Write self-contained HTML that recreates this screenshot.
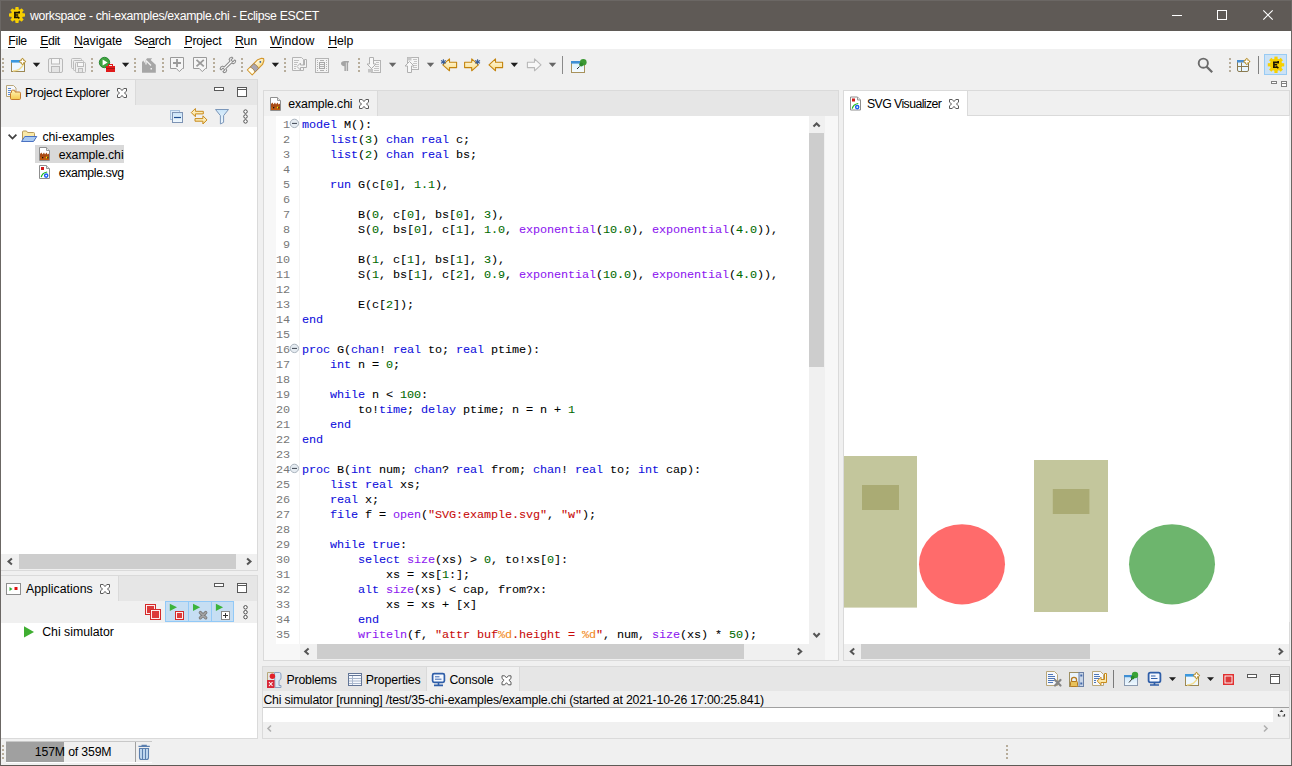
<!DOCTYPE html>
<html><head><meta charset="utf-8">
<style>
*{margin:0;padding:0;box-sizing:border-box}
html,body{width:1292px;height:766px;overflow:hidden;background:#f0f0f0;font-family:"Liberation Sans",sans-serif;font-size:12.3px;color:#000}
.a{position:absolute}
.t{position:absolute;white-space:pre;line-height:15px}
svg{position:absolute;overflow:visible}
/* title */
#title{left:0;top:0;width:1292px;height:31px;background:#5f5a56}
#wb{left:0;top:0;width:1292px;height:766px;border-left:1px solid #6b6764;border-top:1px solid #6b6764;border-right:1px solid #6b6764;border-bottom:1px solid #5f5a56}
#menu{left:1px;top:31px;width:1290px;height:18px;background:#fff}
.mi{position:absolute;top:33px;white-space:pre;line-height:15px}
.mi u{text-decoration:none;border-bottom:1px solid #000;display:inline-block;line-height:11px}
/* panels */
.pb{position:absolute;border:1px solid #dadada}
.hdr{position:absolute;background:#e6e6e6}
.tab{position:absolute;background:#f0f0f0;border-right:1px solid #dadada}
.white{position:absolute;background:#fff}
.code{position:absolute;font-family:"Liberation Mono",monospace;font-size:11.8px;letter-spacing:-0.08px;line-height:15px;white-space:pre;color:#000;-webkit-text-stroke:0.08px currentColor}
.ln{-webkit-text-stroke:0}
.kw{color:#1010dc}
.fn{color:#8e18f0}
.nu{color:#006a00}
.st{color:#c80a0a}
.fm{color:#f28a1a}
.ln{color:#787878;text-align:right}
.sbt{position:absolute;background:#cdcdcd}
</style></head><body>
<!-- title bar -->
<div id="title" class="a"></div>
<svg style="left:0;top:0" width="40" height="30">
<g fill="#f7cf00" transform="translate(17 15)">
<circle r="6"/>
<rect x="-1.7" y="-8" width="3.4" height="16" rx="0.8"/>
<rect x="-8" y="-1.7" width="16" height="3.4" rx="0.8"/>
<rect x="-1.7" y="-8" width="3.4" height="16" rx="0.8" transform="rotate(45)"/>
<rect x="-1.7" y="-8" width="3.4" height="16" rx="0.8" transform="rotate(-45)"/>
</g>
<path d="M14 12.6H19.6M14.9 12.2V17.6M14.9 15H18.2M14 17.4H17.6M19.2 11.2V13.6M17.2 16.6L19.4 18.4" stroke="#1a1400" stroke-width="1.6" fill="none"/>
</svg>
<svg style="left:1172px;top:15px" width="10" height="1"><rect width="10" height="1" fill="#fff"/></svg>
<svg style="left:1217px;top:10px" width="10" height="10"><rect x="0.5" y="0.5" width="9" height="9" fill="none" stroke="#fff"/></svg>
<svg style="left:1263px;top:10px" width="10" height="10"><path d="M0.3 0.3L9.7 9.7M9.7 0.3L0.3 9.7" stroke="#fff" stroke-width="1.1"/></svg>

<!-- menu -->
<div id="menu" class="a"></div>

<!-- ===== Project Explorer panel ===== -->
<div class="pb" style="left:0px;top:79px;width:258px;height:492px;border-left:none"></div>
<div class="hdr" style="left:1px;top:80px;width:256px;height:25px"></div>
<div class="tab" style="left:1px;top:80px;width:135px;height:25px"></div>
<div class="white" style="left:1px;top:127px;width:256px;height:427px"></div>
<!-- tree -->
<div class="a" style="left:35px;top:145px;width:89px;height:18px;background:#d9d9d9"></div>
<!-- hscroll -->
<div class="sbt" style="left:19px;top:554px;width:217px;height:15px"></div>

<!-- ===== Applications panel ===== -->
<div class="pb" style="left:0px;top:575px;width:258px;height:164px;border-left:none"></div>
<div class="hdr" style="left:1px;top:576px;width:256px;height:25px"></div>
<div class="tab" style="left:1px;top:576px;width:118px;height:25px"></div>
<div class="white" style="left:1px;top:623px;width:256px;height:115px"></div>

<!-- ===== Editor panel ===== -->
<div class="pb" style="left:263px;top:90px;width:576px;height:571px"></div>
<div class="hdr" style="left:264px;top:91px;width:574px;height:25px"></div>
<div class="tab" style="left:264px;top:91px;width:114px;height:25px"></div>
<div class="a" style="left:264px;top:116px;width:574px;height:544px;background:#fff"></div>
<div class="a" style="left:264px;top:116px;width:12px;height:528px;background:#f7f7f7"></div>
<div class="a" style="left:825px;top:116px;width:13px;height:544px;background:#f7f7f7"></div>
<div class="a" style="left:264px;top:644px;width:36px;height:16px;background:#f7f7f7"></div>
<div class="code ln" style="left:264px;top:118px;width:26px">1
2
3
4
5
6
7
8
9
10
11
12
13
14
15
16
17
18
19
20
21
22
23
24
25
26
27
28
29
30
31
32
33
34
35</div>
<div class="a" style="left:299px;top:116px;width:510px;height:528px;overflow:hidden">
<div class="code" style="left:3px;top:2px"><span class="kw">model</span> M():
    <span class="kw">list</span>(<span class="nu">3</span>) <span class="kw">chan</span> <span class="kw">real</span> c;
    <span class="kw">list</span>(<span class="nu">2</span>) <span class="kw">chan</span> <span class="kw">real</span> bs;

    <span class="kw">run</span> G(c[<span class="nu">0</span>], <span class="nu">1.1</span>),

        B(<span class="nu">0</span>, c[<span class="nu">0</span>], bs[<span class="nu">0</span>], <span class="nu">3</span>),
        S(<span class="nu">0</span>, bs[<span class="nu">0</span>], c[<span class="nu">1</span>], <span class="nu">1.0</span>, <span class="fn">exponential</span>(<span class="nu">10.0</span>), <span class="fn">exponential</span>(<span class="nu">4.0</span>)),

        B(<span class="nu">1</span>, c[<span class="nu">1</span>], bs[<span class="nu">1</span>], <span class="nu">3</span>),
        S(<span class="nu">1</span>, bs[<span class="nu">1</span>], c[<span class="nu">2</span>], <span class="nu">0.9</span>, <span class="fn">exponential</span>(<span class="nu">10.0</span>), <span class="fn">exponential</span>(<span class="nu">4.0</span>)),

        E(c[<span class="nu">2</span>]);
<span class="kw">end</span>

<span class="kw">proc</span> G(<span class="kw">chan</span>! <span class="kw">real</span> to; <span class="kw">real</span> ptime):
    <span class="kw">int</span> n = <span class="nu">0</span>;

    <span class="kw">while</span> n &lt; <span class="nu">100</span>:
        to!<span class="kw">time</span>; <span class="kw">delay</span> ptime; n = n + <span class="nu">1</span>
    <span class="kw">end</span>
<span class="kw">end</span>

<span class="kw">proc</span> B(<span class="kw">int</span> num; <span class="kw">chan</span>? <span class="kw">real</span> from; <span class="kw">chan</span>! <span class="kw">real</span> to; <span class="kw">int</span> cap):
    <span class="kw">list</span> <span class="kw">real</span> xs;
    <span class="kw">real</span> x;
    <span class="kw">file</span> f = <span class="fn">open</span>(<span class="st">&quot;SVG:example.svg&quot;</span>, <span class="st">&quot;w&quot;</span>);

    <span class="kw">while</span> <span class="kw">true</span>:
        <span class="kw">select</span> <span class="fn">size</span>(xs) &gt; <span class="nu">0</span>, to!xs[<span class="nu">0</span>]:
            xs = xs[<span class="nu">1</span>:];
        <span class="kw">alt</span> <span class="fn">size</span>(xs) &lt; cap, from?x:
            xs = xs + [x]
        <span class="kw">end</span>
        <span class="fn">writeln</span>(f, <span class="st">&quot;attr buf</span><span class="fm">%d</span><span class="st">.height = </span><span class="fm">%d</span><span class="st">&quot;</span>, num, <span class="fn">size</span>(xs) * <span class="nu">50</span>);</div>
</div>
<div class="a" style="left:299px;top:116px;width:1px;height:528px;background:#f4f4f4"></div>
<svg style="left:289px;top:118px" width="11" height="11"><circle cx="5.4" cy="5.4" r="4.2" fill="#e6ecf2" stroke="#aab4be" stroke-width="1"/><rect x="3" y="4.9" width="5" height="1" fill="#3c4450"/></svg>
<svg style="left:289px;top:343px" width="11" height="11"><circle cx="5.4" cy="5.4" r="4.2" fill="#e6ecf2" stroke="#aab4be" stroke-width="1"/><rect x="3" y="4.9" width="5" height="1" fill="#3c4450"/></svg>
<svg style="left:289px;top:463px" width="11" height="11"><circle cx="5.4" cy="5.4" r="4.2" fill="#e6ecf2" stroke="#aab4be" stroke-width="1"/><rect x="3" y="4.9" width="5" height="1" fill="#3c4450"/></svg>
<!-- vscroll -->
<div class="a" style="left:809px;top:116px;width:16px;height:544px;background:#f0f0f0"></div>
<div class="sbt" style="left:809px;top:133px;width:15px;height:234px"></div>
<!-- hscroll -->
<div class="a" style="left:300px;top:644px;width:524px;height:16px;background:#f0f0f0"></div>
<div class="sbt" style="left:317px;top:644px;width:427px;height:15px"></div>

<!-- ===== SVG Visualizer ===== -->
<div class="pb" style="left:843px;top:90px;width:447px;height:571px"></div>
<div class="a" style="left:844px;top:91px;width:445px;height:25px;background:#f0f0f0;border-bottom:1px solid #dadada"></div>
<div class="a" style="left:844px;top:91px;width:124px;height:25px;background:#fff;border-right:1px solid #dadada"></div>
<div class="white" style="left:844px;top:116px;width:445px;height:528px"></div>
<div class="a" style="left:1289px;top:116px;width:1px;height:506px;background:#ebebeb"></div>
<svg style="left:844px;top:116px" width="445" height="528">
<rect x="0" y="340" width="73" height="151.6" fill="#c3c69c"/>
<rect x="18" y="369" width="37" height="25" fill="#aaab74"/>
<ellipse cx="118" cy="448.3" rx="43" ry="40.1" fill="#ff6b6b"/>
<rect x="190" y="344" width="74" height="152" fill="#c3c69c"/>
<rect x="208.8" y="373" width="36.6" height="25" fill="#aaab74"/>
<ellipse cx="328" cy="448.3" rx="43" ry="40.1" fill="#6db56d"/>
</svg>
<div class="a" style="left:844px;top:644px;width:445px;height:16px;background:#f0f0f0"></div>
<div class="sbt" style="left:861px;top:644px;width:229px;height:15px"></div>

<!-- ===== Console panel ===== -->
<div class="pb" style="left:262px;top:666px;width:1028px;height:73px"></div>
<div class="hdr" style="left:263px;top:667px;width:1026px;height:24px"></div>
<div class="a" style="left:426px;top:667px;width:94px;height:24px;background:#f0f0f0;border-left:1px solid #dadada;border-right:1px solid #dadada"></div>
<div class="a" style="left:263px;top:691px;width:1026px;height:16px;background:#f0f0f0"></div>
<div class="a" style="left:263px;top:707px;width:1026px;height:1px;background:#a0a0a0"></div>
<div class="white" style="left:263px;top:708px;width:1010px;height:14px"></div>

<!-- ===== status bar ===== -->
<div class="a" style="left:6px;top:741px;width:146px;height:22px;background:#f0f0f0;border-top:1px solid #c8c8c8;border-bottom:1px solid #fff"></div>
<div class="a" style="left:6px;top:742px;width:58px;height:20px;background:#a0a0a0"></div>
<div class="a" style="left:135px;top:742px;width:1px;height:20px;background:#a0a0a0"></div>

<div class="t" id="L_title" style="left:30.00px;top:9px;letter-spacing:-0.329px;color:#fff;">workspace - chi-examples/example.chi - Eclipse ESCET</div>
<div class="mi" id="L_m_file" style="left:8.20px;top:34px;letter-spacing:-0.267px;"><u>F</u>ile</div>
<div class="mi" id="L_m_edit" style="left:40.20px;top:34px;letter-spacing:-0.400px;"><u>E</u>dit</div>
<div class="mi" id="L_m_nav" style="left:74.00px;top:34px;letter-spacing:-0.057px;"><u>N</u>avigate</div>
<div class="mi" id="L_m_search" style="left:134.00px;top:34px;letter-spacing:-0.400px;">Se<u>a</u>rch</div>
<div class="mi" id="L_m_project" style="left:184.40px;top:34px;letter-spacing:-0.167px;"><u>P</u>roject</div>
<div class="mi" id="L_m_run" style="left:235.00px;top:34px;letter-spacing:-0.300px;"><u>R</u>un</div>
<div class="mi" id="L_m_window" style="left:270.00px;top:34px;letter-spacing:0.120px;"><u>W</u>indow</div>
<div class="mi" id="L_m_help" style="left:328.20px;top:34px;letter-spacing:-0.067px;"><u>H</u>elp</div>
<div class="t" id="L_PE" style="left:25.00px;top:86px;letter-spacing:-0.187px;">Project Explorer</div>
<div class="t" id="L_chiex" style="left:42.40px;top:129.5px;letter-spacing:-0.036px;">chi-examples</div>
<div class="t" id="L_exchi" style="left:58.80px;top:147.5px;letter-spacing:-0.080px;">example.chi</div>
<div class="t" id="L_exsvg" style="left:58.80px;top:165.5px;letter-spacing:-0.380px;">example.svg</div>
<div class="t" id="L_apps" style="left:26.00px;top:582px;letter-spacing:0.036px;">Applications</div>
<div class="t" id="L_chisim" style="left:42.20px;top:625px;letter-spacing:0.000px;">Chi simulator</div>
<div class="t" id="L_edtab" style="left:288.20px;top:97px;letter-spacing:-0.120px;">example.chi</div>
<div class="t" id="L_svgvis" style="left:867.00px;top:97px;letter-spacing:-0.585px;">SVG Visualizer</div>
<div class="t" id="L_problems" style="left:286.60px;top:673px;letter-spacing:-0.229px;">Problems</div>
<div class="t" id="L_properties" style="left:365.80px;top:673px;letter-spacing:-0.133px;">Properties</div>
<div class="t" id="L_console" style="left:449.40px;top:673px;letter-spacing:-0.167px;">Console</div>
<div class="t" id="L_cline" style="left:263.40px;top:693px;letter-spacing:-0.172px;">Chi simulator [running] /test/35-chi-examples/example.chi (started at 2021-10-26 17:00:25.841)</div>
<div class="t" id="L_heap" style="left:34.80px;top:745px;letter-spacing:-0.164px;">157M of 359M</div>
<!-- ===== toolbar icons ===== -->
<svg style="left:0;top:0" width="1292" height="100">
<defs>
<g id="grip" fill="#b7ad9b"><rect x="0" y="0" width="2" height="2"/><rect x="0" y="4" width="2" height="2"/><rect x="0" y="8" width="2" height="2"/><rect x="0" y="12" width="2" height="2"/></g>
<linearGradient id="gy" x1="0" y1="0" x2="0" y2="1"><stop offset="0" stop-color="#fffbe6"/><stop offset="1" stop-color="#f9dc86"/></linearGradient>
<linearGradient id="gb" x1="0" y1="0" x2="0" y2="1"><stop offset="0" stop-color="#d8f0fc"/><stop offset="1" stop-color="#f6fbff"/></linearGradient>
</defs>
<use href="#grip" x="2" y="58"/>
<use href="#grip" x="91" y="58"/>
<use href="#grip" x="134" y="58"/>
<use href="#grip" x="162" y="58"/>
<use href="#grip" x="213" y="58"/>
<use href="#grip" x="241" y="58"/>
<use href="#grip" x="284" y="58"/>
<use href="#grip" x="358" y="58"/>
<use href="#grip" x="1229" y="58"/>
<!-- dropdowns -->
<g fill="#1e1e1e">
<path d="M32.8 62.8h7.4l-3.7 4.2z"/>
<path d="M121.9 62.8h7.4l-3.7 4.2z"/>
<path d="M271.7 62.8h7.4l-3.7 4.2z"/>
<path d="M510.6 62.8h7.4l-3.7 4.2z"/>
</g>
<g fill="#666">
<path d="M388.9 62.8h7.4l-3.7 4.2z"/>
<path d="M426.8 62.8h7.4l-3.7 4.2z"/>
<path d="M548.8 62.8h7.4l-3.7 4.2z"/>
</g>
<!-- new wizard -->
<rect x="11.5" y="60.5" width="13" height="11" fill="#eef8ff" stroke="#9d8852"/>
<rect x="11" y="60" width="14" height="2.6" fill="#3b98de"/>
<path d="M13 71 Q21 70.5 23.5 64" stroke="#f2dc90" stroke-width="1.5" fill="none"/>
<path d="M22.5 57.8L26.2 61.5L22.5 65.2L18.8 61.5z" fill="#b8912c"/>
<path d="M22.5 59.3v4.4M20.3 61.5h4.4" stroke="#fff" stroke-width="1.3"/>
<!-- save -->
<g stroke="#b9b9b9" fill="#efefef">
<rect x="48.5" y="58.5" width="14" height="14" rx="1.5"/>
<rect x="51.5" y="58.5" width="8" height="5.5" fill="#f7f7f7"/>
<rect x="51.5" y="66.5" width="8" height="6" fill="#e4e4e4"/>
</g>
<!-- save all -->
<g stroke="#bcbcbc" fill="#efefef">
<rect x="71.5" y="58.5" width="10" height="10" rx="1"/>
<rect x="73.5" y="60.5" width="10" height="10" rx="1"/>
<rect x="75.5" y="62.5" width="10" height="10" rx="1"/>
<rect x="77.5" y="62.5" width="6" height="4" fill="#f7f7f7"/>
<rect x="78.5" y="68.5" width="4" height="4" fill="#e4e4e4"/>
</g>
<!-- run -->
<circle cx="104.5" cy="62.5" r="5.2" fill="#3fa33f" stroke="#2a8a35"/>
<path d="M102.6 59.4L107.6 62.5L102.6 65.6z" fill="#fff"/>
<rect x="106" y="66" width="9" height="6" fill="#e01a1a"/>
<rect x="108.5" y="64.5" width="4" height="2" fill="none" stroke="#e01a1a"/>
<path d="M106 68.5h9" stroke="#a01010" stroke-width="0.8"/>
<!-- export gray -->
<path d="M142 62L143.5 60.5L144.2 63L147 58.2H152.2L150.6 60L155.8 64.8V72.8H142z" fill="#a6a6a6"/>
<path d="M146 60.5V64.5M146 60.5L151 65.5" stroke="#f0f0f0" stroke-width="1.3" fill="none"/>
<rect x="150.5" y="68" width="1.5" height="1.5" fill="#f0f0f0"/>
<!-- bubble plus -->
<path d="M170.5 57.5H183.5V68.5H182.4L179.4 71.6L176.3 68.5H170.5z" fill="#f6f6f6" stroke="#9a9a9a"/>
<path d="M177 59V67M173 63H181" stroke="#9a9a9a" stroke-width="1.8"/>
<!-- bubble x -->
<path d="M193.5 57.5H206.5V68.5H205.4L202.3 71.6L199.3 68.5H193.5z" fill="#f6f6f6" stroke="#9a9a9a"/>
<path d="M196.5 59.8L203.8 66.4M203.8 59.8L196.5 66.4" stroke="#9a9a9a" stroke-width="1.8"/>
<!-- wrench -->
<path transform="translate(227.9 64.9) rotate(-45)" d="M-4.2 -1.2L4.2 -1.2L4.6 -2.9L6.4 -3.5L8.3 -2.7L8.3 -1.3L5.7 -1.3L5.7 1.3L8.3 1.3L8.3 2.7L6.4 3.5L4.6 2.9L4.2 1.2L-4.2 1.2L-4.6 2.9L-6.4 3.5L-8.3 2.7L-8.3 1.3L-5.7 1.3L-5.7 -1.3L-8.3 -1.3L-8.3 -2.7L-6.4 -3.5L-4.6 -2.9Z" fill="#fdfdfd" stroke="#8a8a8a" stroke-width="1.05" stroke-linejoin="round"/>
<!-- pen -->
<g transform="translate(256.6 65.6) rotate(-45)">
<path d="M-9.6 -3.4L5 -3.4L8.6 -1.7L9.9 0L8.6 1.7L5 3.4L-9.6 3.4Z" fill="url(#gy)" stroke="#d3962c" stroke-width="1.1" stroke-linejoin="round"/>
<path d="M-5.6 -3.4Q-4.2 0 -5.6 3.4L-0.6 3.4Q0.8 0 -0.6 -3.4Z" fill="#a9a6b2" stroke="#a7824a" stroke-width="0.9"/>
<path d="M-9.1 -2.8L-6 -2.8Q-4.9 0 -6 2.8L-9.1 2.8Z" fill="#fffef2"/>
<circle cx="5.2" cy="0" r="0.9" fill="#2c5aa0"/>
</g>
<!-- doc arrow gray -->
<path d="M292.5 57.5H301.5L303.5 59.5V70.5H292.5z" fill="#f4f4f4" stroke="#b4b4b4"/>
<path d="M294 60.5h5M294 62.5h4M294 64.5h3M294 66.5h2M294 68.5h2" stroke="#c0c0c0"/>
<path d="M304.5 59.5H306.5V67.5H300.5V70L297 66.5L300.5 63V65H304.5z" fill="#f4f4f4" stroke="#b0b0b0"/>
<!-- film box -->
<rect x="315.5" y="58.5" width="13" height="14" fill="#f4f4f4" stroke="#b4b4b4"/>
<rect x="319.5" y="62.5" width="5" height="6" fill="none" stroke="#a8a8a8"/>
<path d="M319.5 64.5h5M319.5 66.5h5M320 60.5h4M320 70.5h4" stroke="#b0b0b0"/>
<g fill="#b4b4b4"><rect x="317" y="60" width="1" height="1"/><rect x="317" y="62" width="1" height="1"/><rect x="317" y="64" width="1" height="1"/><rect x="317" y="66" width="1" height="1"/><rect x="317" y="68" width="1" height="1"/><rect x="317" y="70" width="1" height="1"/>
<rect x="326" y="60" width="1" height="1"/><rect x="326" y="62" width="1" height="1"/><rect x="326" y="64" width="1" height="1"/><rect x="326" y="66" width="1" height="1"/><rect x="326" y="68" width="1" height="1"/><rect x="326" y="70" width="1" height="1"/></g>
<!-- pilcrow -->
<path d="M344.5 61H348.9V62.5H348.1V71H346.6V62.5H345.9V71H344.4V66.2C342.3 66.2 341 65 341 63.6C341 62.1 342.4 61 344.5 61z" fill="#a4a4a4"/>
<!-- down arrow doc -->
<rect x="371.5" y="60.5" width="9" height="12" fill="#f6f6f6" stroke="#b4b4b4"/>
<rect x="368" y="69" width="5" height="3.5" fill="#c4c4c4"/>
<path d="M376 62.5h3M376 64.5h3M375 66.5h4M374 68.5h5M374 70.5h5" stroke="#c4c4c4"/>
<path d="M369.5 57.5H373.5V64H376L371.5 68.5L367 64H369.5z" fill="#f8f8f8" stroke="#b0b0b0"/>
<!-- up arrow doc -->
<rect x="407.5" y="57.5" width="11" height="12" fill="#f6f6f6" stroke="#b4b4b4"/>
<rect x="407.5" y="57.5" width="4" height="3" fill="#c8c8c8"/>
<path d="M413 59.5h4M414 61.5h3M413 63.5h4M414 65.5h3M413 67.5h4" stroke="#c4c4c4"/>
<path d="M407.5 72.5H411.5V66H414L409.5 61.5L405 66H407.5z" fill="#f8f8f8" stroke="#b0b0b0"/>
<!-- nav arrows -->
<g stroke="#c4840e" stroke-width="1.1" stroke-linejoin="round" fill="url(#gy)">
<path d="M442.8 64.9L449.5 58.9V62.3H456.6V67.6H449.5V70.8z"/>
<path d="M478.4 64.9L471.7 58.9V62.3H464.6V67.6H471.7V70.8z"/>
<path d="M489 64.9L495.5 58.9V62.3H502.6V67.6H495.5V70.8z"/>
</g>
<path d="M541 64.9L534.5 58.9V62.3H527.4V67.6H534.5V70.8z" fill="#f8f8f8" stroke="#b8b8b8" stroke-width="1.1" stroke-linejoin="round"/>
<g stroke="#3b5f99" stroke-width="1.1">
<path d="M443.4 59.2V64.6M441 60.6L445.8 63.2M445.8 60.6L441 63.2"/>
<path d="M477.6 59.2V64.6M475.2 60.6L480 63.2M480 60.6L475.2 63.2"/>
</g>
<!-- separator -->
<rect x="562" y="56" width="1" height="18" fill="#8a8a8a"/>
<!-- pin window -->
<rect x="571.5" y="61.5" width="13" height="11" fill="url(#gb)" stroke="#a8925c"/>
<rect x="571" y="61" width="12" height="2.6" fill="#3f8fd4"/>
<path d="M579.5 66.5L577 69" stroke="#303030" stroke-width="1"/>
<circle cx="583.3" cy="62.2" r="3.3" fill="#3c9a34"/>
<circle cx="581.2" cy="64.6" r="2" fill="#2f8a2a"/>
<!-- right: search -->
<circle cx="1203.3" cy="63.2" r="4.6" fill="none" stroke="#6b6b6b" stroke-width="1.9"/>
<path d="M1206.6 66.6L1212.2 72.2" stroke="#6b6b6b" stroke-width="2.2"/>
<!-- perspective -->
<rect x="1237.5" y="60.5" width="11" height="11" rx="1.5" fill="#e8f6fe" stroke="#8a7a50"/>
<rect x="1237" y="60" width="10" height="2.5" fill="#4a8fd2"/>
<path d="M1241.5 62.5V71.5M1237.5 66.5H1248.5" stroke="#8a7a50"/>
<path d="M1246.8 57.8L1250.5 61.5L1246.8 65.2L1243.1 61.5z" fill="#b8912c"/>
<path d="M1246.8 59.3v4.4M1244.6 61.5h4.4" stroke="#fff" stroke-width="1.3"/>
<rect x="1258" y="56" width="1" height="18" fill="#808080"/>
<!-- escet button -->
<rect x="1264.5" y="54.5" width="22" height="20" fill="#cbe2f6" stroke="#98cbf4"/>
<g fill="#f7d100" transform="translate(1276 64.8)">
<circle r="6.2"/>
<rect x="-1.6" y="-8.2" width="3.2" height="16.4"/>
<rect x="-8.2" y="-1.6" width="16.4" height="3.2"/>
<rect x="-1.6" y="-8.2" width="3.2" height="16.4" transform="rotate(45)"/>
<rect x="-1.6" y="-8.2" width="3.2" height="16.4" transform="rotate(-45)"/>
</g>
<path d="M1273 62.4H1278.6M1273.9 62V67.4M1273.9 64.8H1277.2M1273 67.2H1276.6M1278.2 61V63.4M1276.2 66.4L1278.4 68.2" stroke="#1a1400" stroke-width="1.6" fill="none"/>
<!-- tiny min max -->
<rect x="1271.5" y="81.5" width="5" height="2" fill="#fff" stroke="#808080"/>
<rect x="1281.5" y="81.5" width="5" height="5" fill="#fff" stroke="#808080"/>
<path d="M1281.5 83.5h5" stroke="#808080"/>
</svg>

<!-- ===== panel icons ===== -->
<svg style="left:0;top:0" width="1292" height="766">
<defs>
<linearGradient id="gf" x1="0" y1="0" x2="0" y2="1"><stop offset="0" stop-color="#fff4b8"/><stop offset="1" stop-color="#f6c94e"/></linearGradient>
<linearGradient id="gbl" x1="0" y1="0" x2="0" y2="1"><stop offset="0" stop-color="#c9e4f8"/><stop offset="1" stop-color="#f2f9fe"/></linearGradient>
<path id="xcl" d="M0.5 0.5H3.2L5 2.6L6.8 0.5H9.5V3.2L7.4 5L9.5 6.8V9.5H6.8L5 7.4L3.2 9.5H0.5V6.8L2.6 5L0.5 3.2Z" fill="#fff" stroke="#5a5a5a" stroke-width="1" stroke-linejoin="round"/>
<g id="pmin"><rect x="0.5" y="0.5" width="9" height="3" fill="#fff" stroke="#595959"/></g>
<g id="pmax"><rect x="0.5" y="0.5" width="9" height="9" fill="#fff" stroke="#595959"/><path d="M0.5 2.5h9" stroke="#595959"/></g>
<g id="kebab" fill="#fff" stroke="#4a4a4a" stroke-width="1"><circle cx="2.5" cy="2.3" r="1.75"/><circle cx="2.5" cy="7.2" r="1.75"/><circle cx="2.5" cy="12.1" r="1.75"/></g>
<path id="chl" d="M3 0L0 3L3 6" fill="none" stroke="#606060" stroke-width="1.8"/>
<path id="chr" d="M0 0L3 3L0 6" fill="none" stroke="#606060" stroke-width="1.8"/>
<g id="chiico">
<path d="M0.5 0.5H7.5L10.5 3.5V13.5H0.5Z" fill="#fff" stroke="#8e8e8e"/>
<path d="M7.5 0.5V3.5H10.5" fill="#e6e6e6" stroke="#9a9a9a"/>
<path d="M1 13V7L2.5 5.5L3.5 7.5L5 5.5L6 7.5L7.5 5.5L8.5 7.5L10 6.5V13Z" fill="#a84a12"/>
<rect x="1" y="10" width="9" height="3" fill="#c05a10"/>
<rect x="3" y="10" width="1.3" height="1.3" fill="#111"/>
<rect x="7" y="9.7" width="1.5" height="1.5" fill="#f0f000"/>
<rect x="8.2" y="10.2" width="1.2" height="1.2" fill="#111"/>
</g>
<g id="svgico">
<path d="M0.5 0.5H7.5L10.5 3.5V13.5H0.5Z" fill="#fff" stroke="#8e8e8e"/>
<path d="M7.5 0.5V3.5H10.5" fill="#e6e6e6" stroke="#9a9a9a"/>
<rect x="2" y="2" width="3" height="3" fill="#d01818"/>
<path d="M2.2 12.2Q3.2 7.8 8.2 7" fill="none" stroke="#18b818" stroke-width="1.2"/>
<circle cx="7.2" cy="10.6" r="1.6" fill="#fff" stroke="#1a5ef0" stroke-width="1.4"/>
</g>
</defs>

<!-- Project Explorer tab -->
<path d="M6.5 85.5H13.5L16 88V96.5H6.5Z" fill="#f6f8fc" stroke="#b9a77a"/>
<path d="M8 88.5h3M8 90.5h3M8 92.5h2.5M8 94.5h2.5" stroke="#5b8bd3"/>
<path d="M11.5 92.5V91Q11.5 90.2 12.3 90.2H14.2Q15 90.2 15 91V92H19.3Q20.5 92 20.5 93.2V98.4Q20.5 99.5 19.3 99.5H11.7Q10.5 99.5 10.5 98.4V93.5Q10.5 92.5 11.5 92.5Z" fill="url(#gf)" stroke="#c47a2e"/>
<use href="#xcl" x="117" y="88"/>
<use href="#pmin" x="214" y="87"/>
<use href="#pmax" x="237" y="87"/>
<!-- PE toolbar -->
<rect x="170.5" y="110.5" width="9" height="9" fill="#dcecf9" stroke="#a9c2dc"/>
<rect x="172.5" y="112.5" width="10" height="10" fill="url(#gbl)" stroke="#7d93b4"/>
<path d="M174 117.5h7" stroke="#1f4f92" stroke-width="1.2"/>
<g stroke="#c88a1c" stroke-width="1" fill="url(#gy)" stroke-linejoin="round">
<path d="M191.3 112.6L195.4 108.5V111.3H203.3V113.9H195.4V116.7Z"/>
<path d="M207 119.9L202.9 115.8V118.6H195V121.2H202.9V124Z"/>
</g>
<path d="M215.5 109.5H228.5L223.6 115.6V122.3L220.4 124V115.6Z" fill="url(#gbl)" stroke="#7b97ba" stroke-linejoin="round"/>
<use href="#kebab" x="243" y="109.3"/>
<!-- tree -->
<path d="M8.6 134.6L12.5 138.6L16.4 134.6" fill="none" stroke="#404040" stroke-width="1.7"/>
<path d="M22.5 140.5V132Q22.5 131 23.5 131H26.5L27.5 132.5H33.5Q34.5 132.5 34.5 133.5V140.5Z" fill="#f9e9a8" stroke="#b79a5a"/>
<path d="M21.5 141.5L24.8 136.5H36.8L33.5 141.5Z" fill="#a9c9f1" stroke="#4a72c2" stroke-linejoin="round"/>
<use href="#chiico" x="39" y="147"/>
<use href="#svgico" x="39" y="165"/>
<!-- PE hscroll -->
<use href="#chl2" x="7.3" y="557.8"/>
<use href="#chr2" x="246.3" y="557.8"/>

<!-- Applications -->
<rect x="6.5" y="583.5" width="14" height="11" fill="#fff" stroke="#8e8e8e"/>
<path d="M9.5 587L12.5 589L9.5 591Z" fill="#2fae2f"/>
<rect x="14.5" y="587" width="3" height="3" fill="#e01010"/>
<use href="#xcl" x="100" y="584"/>
<use href="#pmin" x="214" y="583"/>
<use href="#pmax" x="237" y="583"/>
<g fill="#dc3a3a" stroke="#d42a2a">
<rect x="145.5" y="604.5" width="10" height="10"/>
</g>
<rect x="146.5" y="605.5" width="8" height="8" fill="none" stroke="#fff" stroke-width="0.9"/>
<rect x="150.5" y="609.5" width="10" height="10" fill="#dc3a3a" stroke="#d42a2a"/>
<rect x="151.5" y="610.5" width="8" height="8" fill="none" stroke="#fff" stroke-width="0.9"/>
<rect x="165.5" y="601.5" width="68" height="20" fill="#c6def3" stroke="#92c9f7"/>
<path d="M188.5 601.5V621.5M211.5 601.5V621.5" stroke="#92c9f7"/>
<g fill="#3cb43c">
<path d="M169.8 603.8L177 607.3L169.8 610.9Z"/>
<path d="M193 603.8L200.2 607.3L193 610.9Z"/>
<path d="M215.9 603.8L223.1 607.3L215.9 610.9Z"/>
</g>
<rect x="175.5" y="611.5" width="8" height="8" fill="#dc3a3a" stroke="#d42a2a"/>
<rect x="176.5" y="612.5" width="6" height="6" fill="none" stroke="#fff" stroke-width="0.9"/>
<path d="M200.3 612.5L205.8 617.8M205.8 612.5L200.3 617.8" stroke="#7a7a7a" stroke-width="3.2" stroke-linecap="round"/>
<path d="M200.3 612.5L205.8 617.8M205.8 612.5L200.3 617.8" stroke="#a4a4a4" stroke-width="1.6" stroke-linecap="round"/>
<rect x="221.5" y="611.5" width="8" height="8" fill="#fff" stroke="#8a8a8a"/>
<path d="M225.5 613v5M223 615.5h5" stroke="#333"/>
<use href="#kebab" x="243" y="605"/>
<path d="M24 626.3L34 632L24 637.6Z" fill="#3fae31"/>
</svg>

<!-- ===== panel icons 2 ===== -->
<svg style="left:0;top:0" width="1292" height="766">
<defs>
<path id="xcl2" d="M0.5 0.5H3.2L5 2.6L6.8 0.5H9.5V3.2L7.4 5L9.5 6.8V9.5H6.8L5 7.4L3.2 9.5H0.5V6.8L2.6 5L0.5 3.2Z" fill="#fff" stroke="#5a5a5a" stroke-width="1" stroke-linejoin="round"/>
<path id="chl2" d="M4.6 0.6L1.2 3.6L4.6 6.6" fill="none" stroke="#555" stroke-width="2"/>
<path id="chr2" d="M0.8 0.6L4.2 3.6L0.8 6.6" fill="none" stroke="#555" stroke-width="2"/>
<path id="chu2" d="M0.7 5.2L3.8 2L6.9 5.2" fill="none" stroke="#555" stroke-width="2.1"/>
<path id="chd2" d="M0.7 0.8L3.8 4L6.9 0.8" fill="none" stroke="#555" stroke-width="2.1"/>
</defs>
<!-- editor tab -->
<use href="#chiico" x="270" y="97"/>
<use href="#xcl2" x="359" y="99"/>
<use href="#chu2" x="812.8" y="121.4"/>
<use href="#chd2" x="812.8" y="632.4"/>
<use href="#chl2" x="304" y="647.8"/>
<use href="#chr2" x="797" y="647.8"/>
<!-- svg tab -->
<use href="#svgico" x="850" y="96.5"/>
<use href="#xcl2" x="949" y="99"/>
<use href="#chl2" x="849.6" y="647.8"/>
<use href="#chr2" x="1278" y="647.8"/>
<!-- console tabs -->
<path d="M267.5 680V672.5H274" fill="none" stroke="#b7a87a"/>
<path d="M274.5 672.5H279.5Q281 672.5 281 675V678Q281 680 279 680.5V685.5H281V687.5H275Z" fill="#dde8f4" stroke="#8aa0c0"/>
<circle cx="272.4" cy="676.3" r="2.7" fill="#e2202a"/>
<rect x="267" y="680" width="7.5" height="8" fill="#d8283a"/>
<path d="M269 682L272.5 686M272.5 682L269 686" stroke="#fff" stroke-width="1.1"/>
<rect x="348.5" y="673.5" width="13" height="12" fill="#f6f9fd" stroke="#627596"/>
<path d="M348.5 675.5h13M349 678.5h12M349 681h12M349 683.5h12" stroke="#a8b6cc"/>
<path d="M352.5 676V685" stroke="#a8b6cc"/>
<path d="M348.5 675.5h13" stroke="#627596"/>
<rect x="432.6" y="673.6" width="11.8" height="8.8" rx="1.6" fill="#f4f8ff" stroke="#2f5ea8" stroke-width="1.7"/>
<path d="M435 676.8h4.5M435 679.2h6.5" stroke="#3b68b3" stroke-width="1"/>
<path d="M438.5 683V684.5M434 685.4h9" stroke="#2f5ea8" stroke-width="1.6"/>
<use href="#xcl2" x="501.5" y="675.3"/>
<!-- console toolbar -->
<path d="M1046.5 671.5H1054.5L1057.5 674.5V685.5H1046.5Z" fill="#f6f8fc" stroke="#b9a77a"/>
<path d="M1048 674.5h5M1048 676.5h7M1048 678.5h7M1048 680.5h6M1048 682.5h5" stroke="#4f77b8"/>
<path d="M1055 680L1060.5 685.5M1060.5 680L1055 685.5" stroke="#858585" stroke-width="2.2" stroke-linecap="round"/>
<rect x="1069.5" y="672.5" width="14" height="14" fill="#eaf4fc" stroke="#9d8f62"/>
<rect x="1079" y="672.5" width="4.5" height="14" fill="#c9d6e8" stroke="#6b80a6"/>
<rect x="1080.3" y="674.5" width="2" height="2" fill="#4468a8"/>
<rect x="1080.3" y="682.5" width="2" height="2" fill="#4468a8"/>
<path d="M1071.5 681.5V679.5Q1071.5 677.3 1074 677.3Q1076.5 677.3 1076.5 679.5V681.5" fill="none" stroke="#b57b22" stroke-width="1.3"/>
<rect x="1070.5" y="681.5" width="7" height="5" rx="0.8" fill="#e8c15a" stroke="#b57b22"/>
<path d="M1092.5 671.5H1100.5L1103.5 674.5V685.5H1092.5Z" fill="#f6f8fc" stroke="#b9a77a"/>
<path d="M1094 674.5h5M1094 676.5h6M1094 678.5h5M1094 680.5h2M1094 682.5h2" stroke="#4f77b8"/>
<path d="M1104.5 673.5H1106.5V682.5H1101V684.8L1097.2 681L1101 677.2V679.5H1104.5Z" fill="url(#gy)" stroke="#c88a1c" stroke-linejoin="round"/>
<rect x="1113" y="670" width="1" height="18" fill="#7a7a7a"/>
<rect x="1124.5" y="675.5" width="13" height="10" fill="url(#gbl)" stroke="#8a9ab0"/>
<rect x="1124" y="675" width="11" height="2.2" fill="#3f8fd4"/>
<path d="M1132 679L1129 682.5" stroke="#303030"/>
<circle cx="1135" cy="675" r="3.2" fill="#39a336"/>
<circle cx="1132.6" cy="677.6" r="1.9" fill="#2a8a2a"/>
<rect x="1148.6" y="672.6" width="11.8" height="9.8" rx="1.8" fill="#f4f8ff" stroke="#2f5ea8" stroke-width="1.8"/>
<path d="M1151 676h4.5M1151 678.5h6.5" stroke="#2f5ea8" stroke-width="1.1"/>
<path d="M1154.5 683V684.5M1150 685h9" stroke="#2f5ea8" stroke-width="1.7"/>
<path d="M1169 677.2h7l-3.5 3.8z" fill="#1e1e1e"/>
<rect x="1185.5" y="674.5" width="13" height="11" fill="#eef8ff" stroke="#9d8852"/>
<rect x="1185" y="674" width="14" height="2.6" fill="#3b98de"/>
<path d="M1187 685 Q1195 684.5 1197.5 678" stroke="#f2dc90" stroke-width="1.5" fill="none"/>
<path d="M1196.5 671.8L1200.2 675.5L1196.5 679.2L1192.8 675.5z" fill="#b8912c"/>
<path d="M1196.5 673.3v4.4M1194.3 675.5h4.4" stroke="#fff" stroke-width="1.3"/>
<path d="M1207 677.2h7l-3.5 3.8z" fill="#1e1e1e"/>
<rect x="1223.5" y="674.5" width="10" height="10" fill="#dd3a3a" stroke="#e23030"/>
<rect x="1225" y="676" width="7" height="7" fill="none" stroke="#fff" stroke-width="0.9"/>
<rect x="1247.5" y="674.5" width="9" height="3" fill="#fff" stroke="#595959"/>
<rect x="1270.5" y="674.5" width="9" height="9" fill="#fff" stroke="#595959"/>
<path d="M1270.5 676.5h9" stroke="#595959"/>
<!-- console scroll -->
<path d="M271 725.5L268 728.5L271 731.5" fill="none" stroke="#b0b0b0" stroke-width="1.6"/>
<path d="M1264 725.5L1267 728.5L1264 731.5" fill="none" stroke="#b0b0b0" stroke-width="1.6"/>
<path d="M1279.5 712L1281.5 709.8L1283.5 712Z" fill="#404040"/>
<path d="M1278.5 714v2h2M1284.5 714v2h-2" fill="none" stroke="#404040" stroke-width="1.2"/>
<!-- status -->
<g fill="#b7ad9b"><rect x="2" y="745" width="2" height="2"/><rect x="2" y="749" width="2" height="2"/><rect x="2" y="753" width="2" height="2"/><rect x="2" y="757" width="2" height="2"/></g>
<g fill="#b7ad9b"><rect x="1006" y="745" width="2" height="2"/><rect x="1006" y="749" width="2" height="2"/><rect x="1006" y="753" width="2" height="2"/><rect x="1006" y="757" width="2" height="2"/></g>
<path d="M138.5 746.3H149.8M141.5 745.5H146.8" stroke="#5b7fae" stroke-width="1.3"/>
<path d="M139.5 748.5H148.5V757.5Q148.5 759.5 146.5 759.5H141.5Q139.5 759.5 139.5 757.5Z" fill="#c4dbf1" stroke="#5b7fae" stroke-width="1.1"/>
<path d="M142.5 749V759M145.5 749V759" stroke="#5b7fae" stroke-width="1.1"/>
</svg>

<div id="wb" class="a"></div>
</body></html>
